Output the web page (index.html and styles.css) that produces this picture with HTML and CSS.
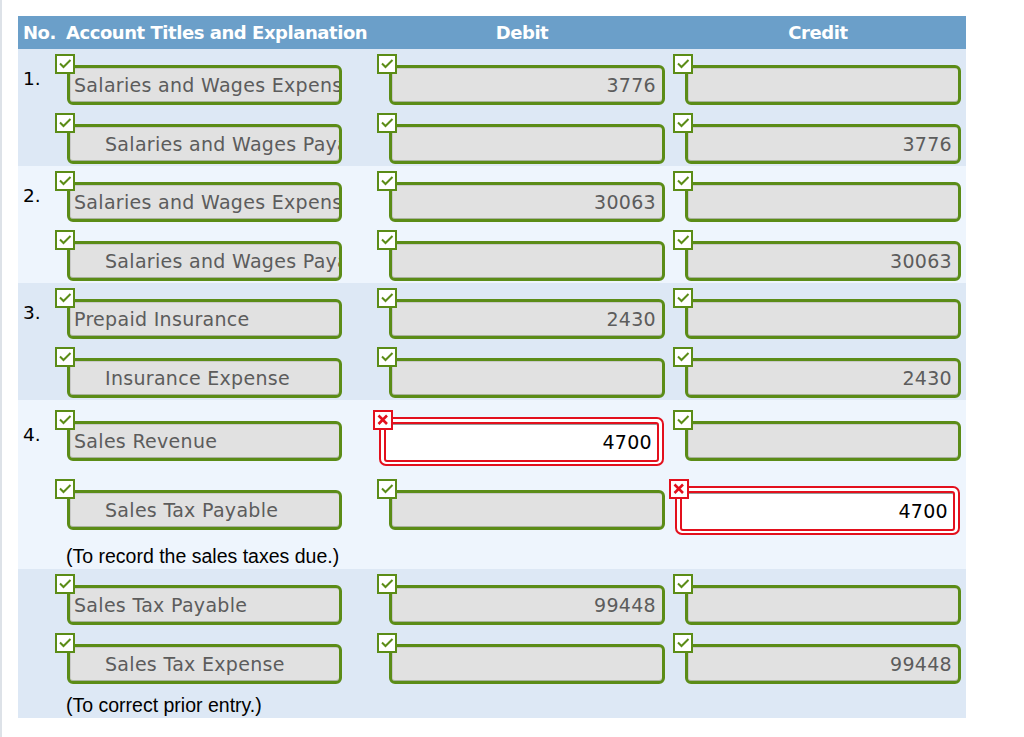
FILE: index.html
```html
<!DOCTYPE html>
<html>
<head>
<meta charset="utf-8">
<link rel="stylesheet" href="styles.css">
</head>
<body>
<div class="page">
  <div class="journal">
    <div class="head">
      <div class="h-no">No.</div>
      <div class="h-acct">Account Titles and Explanation</div>
      <div class="h-num">Debit</div>
      <div class="h-num">Credit</div>
    </div>

    <!-- Entry 1 -->
    <div class="entry dark">
      <div class="no">1.</div>
      <div class="lines">
        <div class="line">
          <div class="cell acct"><div class="field"><span class="mark"><svg viewBox="0 0 16 16"><path class="ck" d="M3 7.5 L6.5 11 L13.5 4"/></svg></span><div class="box"><span class="val">Salaries and Wages Expense</span></div></div></div>
          <div class="cell"><div class="field"><span class="mark"><svg viewBox="0 0 16 16"><path class="ck" d="M3 7.5 L6.5 11 L13.5 4"/></svg></span><div class="box num">3776</div></div></div>
          <div class="cell"><div class="field"><span class="mark"><svg viewBox="0 0 16 16"><path class="ck" d="M3 7.5 L6.5 11 L13.5 4"/></svg></span><div class="box num"></div></div></div>
        </div>
        <div class="line">
          <div class="cell acct"><div class="field"><span class="mark"><svg viewBox="0 0 16 16"><path class="ck" d="M3 7.5 L6.5 11 L13.5 4"/></svg></span><div class="box indent"><span class="val">Salaries and Wages Payable</span></div></div></div>
          <div class="cell"><div class="field"><span class="mark"><svg viewBox="0 0 16 16"><path class="ck" d="M3 7.5 L6.5 11 L13.5 4"/></svg></span><div class="box num"></div></div></div>
          <div class="cell"><div class="field"><span class="mark"><svg viewBox="0 0 16 16"><path class="ck" d="M3 7.5 L6.5 11 L13.5 4"/></svg></span><div class="box num">3776</div></div></div>
        </div>
      </div>
    </div>

    <!-- Entry 2 -->
    <div class="entry light">
      <div class="no">2.</div>
      <div class="lines">
        <div class="line">
          <div class="cell acct"><div class="field"><span class="mark"><svg viewBox="0 0 16 16"><path class="ck" d="M3 7.5 L6.5 11 L13.5 4"/></svg></span><div class="box"><span class="val">Salaries and Wages Expense</span></div></div></div>
          <div class="cell"><div class="field"><span class="mark"><svg viewBox="0 0 16 16"><path class="ck" d="M3 7.5 L6.5 11 L13.5 4"/></svg></span><div class="box num">30063</div></div></div>
          <div class="cell"><div class="field"><span class="mark"><svg viewBox="0 0 16 16"><path class="ck" d="M3 7.5 L6.5 11 L13.5 4"/></svg></span><div class="box num"></div></div></div>
        </div>
        <div class="line">
          <div class="cell acct"><div class="field"><span class="mark"><svg viewBox="0 0 16 16"><path class="ck" d="M3 7.5 L6.5 11 L13.5 4"/></svg></span><div class="box indent"><span class="val">Salaries and Wages Payable</span></div></div></div>
          <div class="cell"><div class="field"><span class="mark"><svg viewBox="0 0 16 16"><path class="ck" d="M3 7.5 L6.5 11 L13.5 4"/></svg></span><div class="box num"></div></div></div>
          <div class="cell"><div class="field"><span class="mark"><svg viewBox="0 0 16 16"><path class="ck" d="M3 7.5 L6.5 11 L13.5 4"/></svg></span><div class="box num">30063</div></div></div>
        </div>
      </div>
    </div>

    <!-- Entry 3 -->
    <div class="entry dark">
      <div class="no">3.</div>
      <div class="lines">
        <div class="line">
          <div class="cell acct"><div class="field"><span class="mark"><svg viewBox="0 0 16 16"><path class="ck" d="M3 7.5 L6.5 11 L13.5 4"/></svg></span><div class="box"><span class="val">Prepaid Insurance</span></div></div></div>
          <div class="cell"><div class="field"><span class="mark"><svg viewBox="0 0 16 16"><path class="ck" d="M3 7.5 L6.5 11 L13.5 4"/></svg></span><div class="box num">2430</div></div></div>
          <div class="cell"><div class="field"><span class="mark"><svg viewBox="0 0 16 16"><path class="ck" d="M3 7.5 L6.5 11 L13.5 4"/></svg></span><div class="box num"></div></div></div>
        </div>
        <div class="line">
          <div class="cell acct"><div class="field"><span class="mark"><svg viewBox="0 0 16 16"><path class="ck" d="M3 7.5 L6.5 11 L13.5 4"/></svg></span><div class="box indent"><span class="val">Insurance Expense</span></div></div></div>
          <div class="cell"><div class="field"><span class="mark"><svg viewBox="0 0 16 16"><path class="ck" d="M3 7.5 L6.5 11 L13.5 4"/></svg></span><div class="box num"></div></div></div>
          <div class="cell"><div class="field"><span class="mark"><svg viewBox="0 0 16 16"><path class="ck" d="M3 7.5 L6.5 11 L13.5 4"/></svg></span><div class="box num">2430</div></div></div>
        </div>
      </div>
    </div>

    <!-- Entry 4 -->
    <div class="entry light err">
      <div class="no">4.</div>
      <div class="lines">
        <div class="line">
          <div class="cell acct"><div class="field"><span class="mark"><svg viewBox="0 0 16 16"><path class="ck" d="M3 7.5 L6.5 11 L13.5 4"/></svg></span><div class="box"><span class="val">Sales Revenue</span></div></div></div>
          <div class="cell"><div class="field bad"><span class="mark"><svg viewBox="0 0 16 16"><path class="xx" d="M3.5 3.5 L12 12 M12 3.5 L3.5 12"/></svg></span><div class="outer"><div class="inner">4700</div></div></div></div>
          <div class="cell"><div class="field"><span class="mark"><svg viewBox="0 0 16 16"><path class="ck" d="M3 7.5 L6.5 11 L13.5 4"/></svg></span><div class="box num"></div></div></div>
        </div>
        <div class="line">
          <div class="cell acct"><div class="field"><span class="mark"><svg viewBox="0 0 16 16"><path class="ck" d="M3 7.5 L6.5 11 L13.5 4"/></svg></span><div class="box indent"><span class="val">Sales Tax Payable</span></div></div></div>
          <div class="cell"><div class="field"><span class="mark"><svg viewBox="0 0 16 16"><path class="ck" d="M3 7.5 L6.5 11 L13.5 4"/></svg></span><div class="box num"></div></div></div>
          <div class="cell"><div class="field bad"><span class="mark"><svg viewBox="0 0 16 16"><path class="xx" d="M3.5 3.5 L12 12 M12 3.5 L3.5 12"/></svg></span><div class="outer"><div class="inner">4700</div></div></div></div>
        </div>
        <div class="note">(To record the sales taxes due.)</div>
      </div>
    </div>

    <!-- Entry 5 -->
    <div class="entry dark">
      <div class="no"></div>
      <div class="lines">
        <div class="line">
          <div class="cell acct"><div class="field"><span class="mark"><svg viewBox="0 0 16 16"><path class="ck" d="M3 7.5 L6.5 11 L13.5 4"/></svg></span><div class="box"><span class="val">Sales Tax Payable</span></div></div></div>
          <div class="cell"><div class="field"><span class="mark"><svg viewBox="0 0 16 16"><path class="ck" d="M3 7.5 L6.5 11 L13.5 4"/></svg></span><div class="box num">99448</div></div></div>
          <div class="cell"><div class="field"><span class="mark"><svg viewBox="0 0 16 16"><path class="ck" d="M3 7.5 L6.5 11 L13.5 4"/></svg></span><div class="box num"></div></div></div>
        </div>
        <div class="line">
          <div class="cell acct"><div class="field"><span class="mark"><svg viewBox="0 0 16 16"><path class="ck" d="M3 7.5 L6.5 11 L13.5 4"/></svg></span><div class="box indent"><span class="val">Sales Tax Expense</span></div></div></div>
          <div class="cell"><div class="field"><span class="mark"><svg viewBox="0 0 16 16"><path class="ck" d="M3 7.5 L6.5 11 L13.5 4"/></svg></span><div class="box num"></div></div></div>
          <div class="cell"><div class="field"><span class="mark"><svg viewBox="0 0 16 16"><path class="ck" d="M3 7.5 L6.5 11 L13.5 4"/></svg></span><div class="box num">99448</div></div></div>
        </div>
        <div class="note">(To correct prior entry.)</div>
      </div>
    </div>
  </div>
</div>
</body>
</html>
```

FILE: styles.css
```css
html, body {
  margin: 0;
  padding: 0;
  background: #ffffff;
}

.page {
  min-height: 737px;
  box-sizing: border-box;
  border-left: 2px solid #dde2e8;
  padding: 16px 0 0 16px;
}

.journal {
  width: 948px;
}

.head {
  display: flex;
  align-items: center;
  height: 33px;
  background: #6b9fc9;
  color: #ffffff;
  font-family: "DejaVu Sans", Verdana, sans-serif;
  font-weight: bold;
  font-size: 18px;
  letter-spacing: -0.45px;
  white-space: nowrap;
}

.h-no {
  width: 34px;
  box-sizing: border-box;
  padding-left: 5px;
}

.h-acct {
  width: 322px;
  box-sizing: border-box;
  padding-left: 14px;
}

.h-num {
  width: 296px;
  text-align: center;
}

.entry {
  display: flex;
}

.entry.dark {
  background: #dde8f5;
}

.entry.light {
  background: #eef5fd;
}

.no {
  width: 34px;
  box-sizing: border-box;
  padding: 19px 0 0 5px;
  font-family: "DejaVu Sans", Verdana, sans-serif;
  font-size: 18.5px;
  line-height: 22px;
  color: #000000;
}

.entry.err .no {
  padding-top: 24px;
}

.lines {
  width: 914px;
  padding: 5px 0 2px;
}

.entry.err .lines {
  padding-top: 10px;
}

.line {
  display: grid;
  grid-template-columns: 322px 296px 296px;
  align-items: start;
}

.line + .line {
  margin-top: 8px;
}

.entry.err .line + .line {
  margin-top: 13px;
}

.cell {
  padding-left: 3px;
}

.field {
  position: relative;
  padding: 11px 0 0 12px;
}

.mark {
  position: absolute;
  left: 0;
  top: 0;
  width: 20px;
  height: 20px;
  box-sizing: border-box;
  border: 2px solid #5b8c17;
  background: #ffffff;
  z-index: 2;
}

.mark svg {
  display: block;
  width: 16px;
  height: 16px;
}

.ck {
  fill: none;
  stroke: #5b8c17;
  stroke-width: 2;
}

.xx {
  fill: none;
  stroke: #e3101d;
  stroke-width: 2.6;
}

.box {
  width: 276px;
  height: 40px;
  box-sizing: border-box;
  border: 3px solid #5b8c17;
  border-radius: 6px;
  background: #e1e1e1;
  box-shadow: inset 1px 1px 0 #c9c9c9, inset 0 -1px 0 #a9b39c;
  display: flex;
  align-items: center;
  padding: 0 5px 0 4px;
  font-family: "DejaVu Sans", Verdana, sans-serif;
  font-size: 19px;
  letter-spacing: 0.3px;
  color: #5c5c5c;
  white-space: nowrap;
  overflow: hidden;
}

.acct .box {
  width: 275px;
}

.box.indent {
  padding-left: 35px;
}

.box.num {
  justify-content: flex-end;
  padding-right: 6px;
}

.field.bad {
  margin-left: -4px;
  padding: 7px 0 0 6px;
}

.field.bad .mark {
  border-color: #e3101d;
}

.outer {
  width: 285px;
  height: 49px;
  box-sizing: border-box;
  border: 2px solid #e3101d;
  border-radius: 7px;
  padding: 3px 3px 2px;
  background: #ffffff;
}

.inner {
  height: 100%;
  box-sizing: border-box;
  border: 2px solid #e3101d;
  border-radius: 3px;
  box-shadow: inset 0 1px 0 #9a9a9a;
  background: #ffffff;
  display: flex;
  align-items: center;
  justify-content: flex-end;
  padding-right: 5px;
  font-family: "DejaVu Sans", Verdana, sans-serif;
  font-size: 19px;
  letter-spacing: 0.3px;
  color: #000000;
}

.note {
  margin-top: 10px;
  padding-left: 14px;
  font-family: "Liberation Sans", Arial, sans-serif;
  font-size: 19.5px;
  line-height: 22px;
  color: #000000;
}
```
